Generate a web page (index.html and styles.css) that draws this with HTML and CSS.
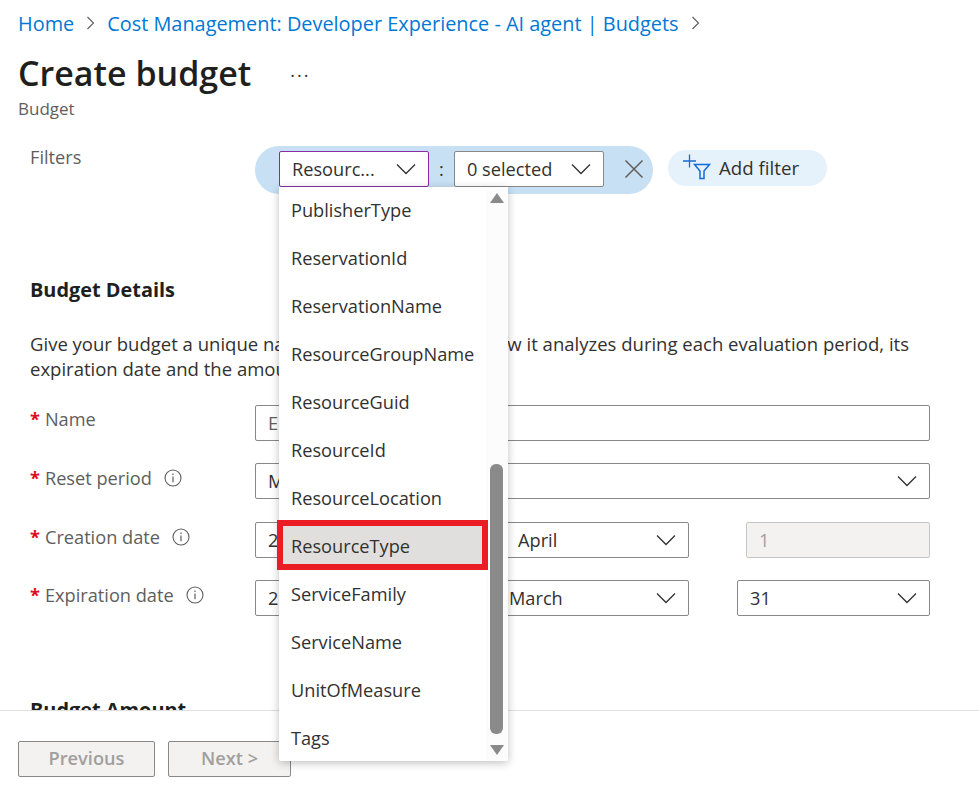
FILE: index.html
```html
<!DOCTYPE html>
<html lang="en">
<head>
  <meta charset="UTF-8" />
  <title>Create budget</title>
  <link rel="stylesheet" href="styles.css">
</head>
<body>
  <svg class="defs" width="0" height="0">
    <symbol id="chev" viewBox="0 0 20 12"><path d="M1 1.5 L10 10.5 L19 1.5" fill="none" stroke="currentColor" stroke-width="1.3"/></symbol>
    <symbol id="info" viewBox="0 0 18 18"><circle cx="9" cy="9" r="8" fill="none" stroke="currentColor" stroke-width="1.1"/><path d="M9 7.6 V13.2 M9 4.6 V6" fill="none" stroke="currentColor" stroke-width="1.2"/></symbol>
  </svg>

  <div class="page">
    <main class="content">
      <nav class="crumbs">
        <a href="#">Home</a>
        <svg class="crumb-sep" viewBox="0 0 8 14"><path d="M1 1 L7 7 L1 13" fill="none" stroke="currentColor" stroke-width="1.1"/></svg>
        <a href="#">Cost Management: Developer Experience - AI agent | Budgets</a>
        <svg class="crumb-sep" viewBox="0 0 8 14"><path d="M1 1 L7 7 L1 13" fill="none" stroke="currentColor" stroke-width="1.1"/></svg>
      </nav>

      <div class="title-row">
        <h1>Create budget</h1>
        <span class="more">...</span>
      </div>
      <p class="subtitle">Budget</p>

      <section class="form-body">
        <div class="filter-row">
          <span class="label-plain">Filters</span>
          <div class="filter-pill">
            <div class="select select-key">
              <span>Resourc...</span>
              <svg class="chev"><use href="#chev"/></svg>
              <div class="dropdown">
                <ul class="options">
                  <li>PublisherType</li>
                  <li>ReservationId</li>
                  <li>ReservationName</li>
                  <li>ResourceGroupName</li>
                  <li>ResourceGuid</li>
                  <li>ResourceId</li>
                  <li>ResourceLocation</li>
                  <li class="marked">ResourceType</li>
                  <li>ServiceFamily</li>
                  <li>ServiceName</li>
                  <li>UnitOfMeasure</li>
                  <li>Tags</li>
                </ul>
                <div class="scroll">
                  <span class="arrow arrow-up"></span>
                  <span class="thumb"></span>
                  <span class="arrow arrow-down"></span>
                </div>
              </div>
            </div>
            <span class="colon">:</span>
            <div class="select select-value">
              <span>0 selected</span>
              <svg class="chev"><use href="#chev"/></svg>
            </div>
            <svg class="close" viewBox="0 0 20 20"><path d="M1.5 1.5 L18.5 18.5 M18.5 1.5 L1.5 18.5" fill="none" stroke="currentColor" stroke-width="1.5"/></svg>
          </div>
          <button class="add-filter" type="button">
            <svg class="add-icon" viewBox="0 0 30 28"><path d="M1 8 H14 M7.5 1.5 V14.5" fill="none" stroke="#0f6cdb" stroke-width="1.3"/><path d="M12.5 11.5 H27.5 L22 18 V25.5 H18 V18 Z" fill="none" stroke="#0f6cdb" stroke-width="1.5"/></svg>
            Add filter
          </button>
        </div>

        <h2 class="details-head">Budget Details</h2>
        <p class="intro">Give your budget a unique name. Select the time window it analyzes during each evaluation period, its expiration date and the amount.</p>

        <div class="fields">
          <div class="field">
            <label class="label label-short"><b>*</b> Name</label>
            <div class="input">Enter a unique name</div>
          </div>
          <div class="field">
            <label class="label"><b>*</b> Reset period <svg class="info"><use href="#info"/></svg></label>
            <div class="select">
              <span>Monthly</span>
              <svg class="chev"><use href="#chev"/></svg>
            </div>
          </div>
          <div class="field field-creation">
            <label class="label"><b>*</b> Creation date <svg class="info"><use href="#info"/></svg></label>
            <div class="dates dates-start">
              <div class="select"><span>2024</span><svg class="chev"><use href="#chev"/></svg></div>
              <div class="select"><span>April</span><svg class="chev"><use href="#chev"/></svg></div>
              <div class="input input-off">1</div>
            </div>
          </div>
          <div class="field">
            <label class="label"><b>*</b> Expiration date <svg class="info"><use href="#info"/></svg></label>
            <div class="dates dates-end">
              <div class="select"><span>2026</span><svg class="chev"><use href="#chev"/></svg></div>
              <div class="select select-tight"><span>March</span><svg class="chev"><use href="#chev"/></svg></div>
              <div class="select"><span>31</span><svg class="chev"><use href="#chev"/></svg></div>
            </div>
          </div>
        </div>

        <h2 class="amount-head">Budget Amount</h2>
      </section>
    </main>

    <footer class="actions">
      <button class="btn btn-prev" type="button" disabled>Previous</button>
      <button class="btn btn-next" type="button" disabled>Next &gt;</button>
    </footer>
  </div>
</body>
</html>
```

FILE: styles.css
```css
* {
  box-sizing: border-box;
}

body {
  margin: 0;
  background: #ffffff;
  color: #323130;
  font-family: "Open Sans", "Noto Sans", sans-serif;
  font-size: 18.2px;
}

.defs {
  position: absolute;
}

.page {
  display: flex;
  flex-direction: column;
  height: 790px;
  overflow: hidden;
}

.content {
  flex: 1;
  min-height: 0;
  padding-left: 18px;
}

/* Breadcrumb */
.crumbs {
  display: flex;
  align-items: center;
  gap: 12px;
  height: 24px;
  margin-top: 11px;
}

.crumbs a {
  color: #0078d4;
  text-decoration: none;
  font-size: 19.9px;
}

.crumb-sep {
  width: 9px;
  height: 14px;
  color: #605e5c;
}

/* Title */
.title-row {
  display: flex;
  align-items: center;
  height: 46px;
  margin-top: 15px;
}

h1 {
  margin: 0;
  font-size: 34px;
  font-weight: 600;
  color: #201f1e;
}

.more {
  margin-left: 39px;
  margin-top: -6px;
  font-size: 18px;
  letter-spacing: 2px;
}

.subtitle {
  margin: 2px 0 0;
  height: 22px;
  line-height: 22px;
  font-size: 17px;
  color: #605e5c;
}

/* Form */
.form-body {
  padding-left: 12px;
  width: 912px;
}

.filter-row {
  display: flex;
  align-items: flex-start;
  margin-top: 26px;
  height: 48px;
}

.label-plain {
  width: 225px;
  line-height: 22px;
  color: #605e5c;
}

.filter-pill {
  display: flex;
  align-items: center;
  width: 398px;
  height: 48px;
  padding: 0 0 2px 24px;
  border-radius: 24px;
  background: #c7e0f4;
}

.select,
.input {
  position: relative;
  display: flex;
  align-items: center;
  justify-content: space-between;
  height: 36px;
  padding: 0 12px;
  background: #ffffff;
  border: 1px solid #8a8886;
  border-radius: 2px;
  white-space: nowrap;
}

.select-key {
  width: 150px;
  border-color: #8a2da5;
}

.select-value {
  width: 150px;
}

.select-tight {
  padding-left: 11px;
}

.colon {
  width: 25px;
  text-align: center;
}

.chev {
  width: 20px;
  height: 12px;
  flex: none;
  color: #323130;
}

.close {
  width: 20px;
  height: 20px;
  margin-left: 20px;
  color: #605e5c;
}

.add-filter {
  display: flex;
  align-items: center;
  gap: 7px;
  width: 159px;
  height: 36px;
  margin: 4px 0 0 15px;
  padding: 0 0 2px 14px;
  border: none;
  border-radius: 18px;
  background: #e5f1fb;
  color: #323130;
  font: inherit;
  font-size: 18.7px;
}

.add-icon {
  width: 30px;
  height: 28px;
  flex: none;
}

/* Dropdown */
.dropdown {
  position: absolute;
  top: 35px;
  left: -1px;
  z-index: 5;
  display: flex;
  width: 229px;
  height: 574px;
  background: #ffffff;
  border-radius: 0 0 2px 2px;
  box-shadow: 0 2px 8px rgba(0, 0, 0, 0.25);
}

.options {
  width: 207px;
  margin: -1px 0 0;
  padding: 0;
  list-style: none;
}

.options li {
  position: relative;
  height: 48px;
  padding-left: 12px;
  line-height: 48px;
}

.options .marked {
  background: #e1dfdd;
}

.options .marked::after {
  content: "";
  position: absolute;
  top: -2px;
  left: -2px;
  right: -2px;
  bottom: 0;
  border: 6px solid #ea1c24;
}

.scroll {
  display: flex;
  flex: 1;
  flex-direction: column;
  align-items: center;
  padding-right: 1px;
  background: #fcfcfc;
}

.arrow {
  width: 0;
  height: 0;
  border-left: 7px solid transparent;
  border-right: 7px solid transparent;
}

.arrow-up {
  margin-top: 6px;
  border-bottom: 10px solid #8a8a8a;
}

.arrow-down {
  margin: 11px 0 6px;
  border-top: 10px solid #8a8a8a;
}

.thumb {
  width: 13px;
  height: 270px;
  margin-top: auto;
  background: #8a8a8a;
  border-radius: 6px;
}

/* Details */
h2 {
  margin: 0;
  font-size: 19.9px;
  font-weight: 700;
  color: #201f1e;
}

.details-head {
  margin-top: 84px;
  line-height: 24px;
}

.intro {
  margin: 29px 0 0;
  font-size: 18.53px;
  line-height: 25px;
}

.fields {
  display: flex;
  flex-direction: column;
  gap: 22px;
  margin-top: 24px;
}

.field {
  display: flex;
  align-items: flex-start;
}

.field-creation {
  margin-top: 1px;
}

.label {
  display: flex;
  align-items: center;
  flex: none;
  width: 225px;
  height: 29px;
  color: #605e5c;
}

.label-short {
  height: 27px;
}

.label b {
  margin-right: 5px;
  color: #e00b1c;
  font-weight: 700;
}

.info {
  width: 18px;
  height: 18px;
  margin-left: 12px;
  color: #605e5c;
}

.field > .input,
.field > .select {
  flex: 1;
}

.input {
  color: #605e5c;
}

.input-off {
  background: #f3f2f1;
  border-color: #c8c6c4;
  color: #a19f9d;
}

.dates {
  flex: 1;
  display: grid;
}

.dates-start {
  grid-template-columns: 193px 184px 184px;
  column-gap: 57px;
}

.dates-end {
  grid-template-columns: 194px 192px 193px;
  column-gap: 48px;
}

.amount-head {
  margin-top: 82px;
  line-height: 24px;
}

/* Footer buttons */
.actions {
  position: relative;
  z-index: 1;
  display: flex;
  gap: 13px;
  flex: none;
  height: 80px;
  padding: 30px 0 0 18px;
  background: #ffffff;
  border-top: 1px solid #e1dfdd;
}

.btn {
  height: 36px;
  padding: 0 0 2px;
  background: #f3f2f1;
  border: 1px solid #8a8886;
  border-radius: 2px;
  color: #a19f9d;
  font: inherit;
  font-weight: 600;
}

.btn-prev {
  width: 137px;
}

.btn-next {
  width: 123px;
}
```
